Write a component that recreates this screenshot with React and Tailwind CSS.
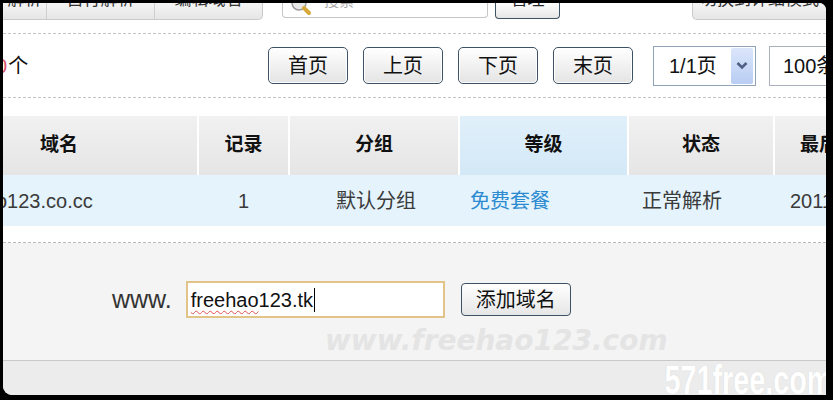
import React from 'react';

const cjk = { fontFamily: '"Liberation Sans", "Noto Sans CJK SC", sans-serif' };

const PageButton = ({ label }) => (
  <div className="flex h-[37px] w-[80px] items-center justify-center rounded-[5px] border-[1.5px] border-[#3e5265] bg-linear-to-b from-white to-[#e4e4e4] text-[20px] text-[#111] shadow-[inset_0_0_0_1px_#ffffff]">
    {label}
  </div>
);

const columns = [
  { title: '域名', w: 'w-[194px]', head: 'justify-start pl-[37px]' },
  { title: '记录', w: 'w-[91px]', head: 'justify-center' },
  { title: '分组', w: 'w-[170px]', head: 'justify-center' },
  { title: '等级', w: 'w-[169px]', head: 'justify-center', active: true },
  { title: '状态', w: 'w-[146px]', head: 'justify-center' },
  { title: '最后解析', w: 'flex-1', head: 'justify-start pl-[25px]' },
];

export default function App() {
  return (
    <div className="h-[400px] w-[833px] overflow-hidden bg-black pt-[3px] pl-[3px] pr-[7px] pb-[5px]" style={cjk}>
      <div className="relative flex h-full w-full flex-col overflow-hidden rounded-tr-[7px] rounded-bl-[9px] bg-white">
        {/* top tab strip, cut off by the frame */}
        <div className="flex h-[17px] shrink-0 items-end">
          <div className="flex h-[17px] overflow-hidden rounded-br-[5px] border-b border-r border-[#c9c9c9] bg-linear-to-b from-[#f4f4f4] to-[#e6e6e6]">
            <div className="flex w-[44px] items-end justify-center border-r border-[#cfcfcf] text-[17px] leading-none text-[#333]">
              <span className="translate-y-[-11px]">解析</span>
            </div>
            <div className="flex w-[108px] items-end justify-center border-r border-[#cfcfcf] text-[17px] leading-none text-[#333]">
              <span className="translate-y-[-11px]">自行解析</span>
            </div>
            <div className="flex w-[107px] items-end justify-center text-[17px] leading-none text-[#333]">
              <span className="translate-y-[-11px]">编辑域名</span>
            </div>
          </div>
          <div className="ml-[19px] flex h-[15px] w-[206px] items-end self-start overflow-hidden rounded-b-[4px] border border-t-0 border-[#c6c6c6] bg-white pl-[7px]">
            <svg width="22" height="16" viewBox="0 0 22 16" className="translate-y-[-1px]">
              <circle cx="9" cy="3" r="7" fill="#e9e9e9" stroke="#9a9a9a" strokeWidth="1.5" />
              <path d="M14 8 L19 13" stroke="#d6a93a" strokeWidth="4" strokeLinecap="round" />
            </svg>
            <span className="ml-[12px] translate-y-[-9px] text-[15px] leading-none text-[#aaa]">搜索</span>
          </div>
          <div className="ml-[7px] flex h-[16px] w-[65px] items-end justify-center self-start overflow-hidden rounded-b-[4px] border-[1.5px] border-t-0 border-[#3e5265] bg-linear-to-b from-white to-[#e6e6e6]">
            <span className="translate-y-[-10px] text-[17px] leading-none text-[#222]">管理</span>
          </div>
          <div className="ml-auto flex h-[17px] w-[134px] items-end justify-center overflow-hidden rounded-bl-[5px] border-b border-l border-[#c9c9c9] bg-linear-to-b from-[#f4f4f4] to-[#e6e6e6]">
            <span className="translate-y-[-11px] whitespace-nowrap text-[17px] leading-none text-[#333]">切换到详细模式</span>
          </div>
        </div>

        <div className="h-[14px] shrink-0 border-b border-dashed border-[#c4c4c4]" />

        {/* pager */}
        <div className="flex h-[64px] shrink-0 items-center border-b border-dashed border-[#c4c4c4]">
          <div className="flex w-[265px] items-center text-[20px] text-[#111]">
            <span className="-ml-[7px] text-[#d9536f]">0</span>
            <span className="ml-[1px]">个</span>
          </div>
          <div className="flex items-center gap-[15px]">
            <PageButton label="首页" />
            <PageButton label="上页" />
            <PageButton label="下页" />
            <PageButton label="末页" />
          </div>
          <div className="ml-[20px] flex h-[40px] w-[103px] items-center border border-[#8fa3b6] bg-white pl-[15px] pr-[2px]">
            <span className="flex-1 text-[20px] text-[#111]">1/1页</span>
            <div className="flex h-[36px] w-[22px] items-center justify-center rounded-[2px] bg-linear-to-b from-[#dbe6fb] to-[#b9cdf3]">
              <svg width="12" height="9" viewBox="0 0 12 9">
                <path d="M1.5 2 L6 6.5 L10.5 2" fill="none" stroke="#4d6185" strokeWidth="2.6" />
              </svg>
            </div>
          </div>
          <div className="ml-[13px] flex h-[40px] flex-1 items-center overflow-hidden border border-r-0 border-[#a9b2bc] bg-white pl-[13px] text-[20px] text-[#111] whitespace-nowrap">
            100条/页
          </div>
        </div>

        <div className="h-[18px] shrink-0" />

        {/* table head */}
        <div className="flex h-[59px] shrink-0 bg-linear-to-b from-[#f1f1f1] to-[#e5e5e5]">
          {columns.map((c, i) => (
            <div
              key={c.title}
              className={`${c.w} flex items-center overflow-hidden whitespace-nowrap text-[19px] font-bold text-[#111] ${c.head} ${i > 0 ? 'border-l-2 border-white' : ''} ${c.active ? 'bg-linear-to-b from-[#e0f0fb] to-[#d3e8f6]' : ''}`}
            >
              {c.title}
            </div>
          ))}
        </div>

        {/* table row */}
        <div className="flex h-[51px] shrink-0 items-center bg-[#e4f3fc] text-[20px] text-[#3a3a3a]">
          <div className="w-[194px] overflow-hidden whitespace-nowrap">
            <span className="-ml-[7px] inline-block">o123.co.cc</span>
          </div>
          <div className="w-[93px] text-center">1</div>
          <div className="w-[172px] text-center">默认分组</div>
          <div className="w-[171px] pl-[8px] text-[#2b8ad0]">免费套餐</div>
          <div className="w-[148px] pl-[9px]">正常解析</div>
          <div className="flex-1 overflow-hidden whitespace-nowrap pl-[9px]">2011-05-02</div>
        </div>

        <div className="h-[17px] shrink-0 border-b border-dashed border-[#b9b9b9]" />

        {/* add domain */}
        <div className="flex h-[118px] shrink-0 flex-col border-b border-[#c9c9c9] bg-[#f4f4f4] pt-[38px]">
          <div className="flex items-center pl-[109px]">
            <span className="text-[25px] leading-none text-[#333]">www.</span>
            <div className="ml-[14px] flex h-[37px] w-[259px] items-center border-2 border-[#e2c388] bg-white pl-[3px] text-[20px] text-[#111]">
              <span className="underline decoration-wavy decoration-[#e05050] decoration-1 underline-offset-[3px]">freehao</span>
              <span>123.tk</span>
              <span className="ml-[1px] h-[24px] w-[1px] bg-black" />
            </div>
            <div className="ml-[16px] flex h-[33px] w-[110px] items-center justify-center rounded-[4px] border-[1.5px] border-[#3e5265] bg-linear-to-b from-white to-[#e6e6e6] text-[20px] text-[#111]">
              添加域名
            </div>
          </div>
        </div>

        <div className="flex-1 bg-[#ececec]" />

        {/* video watermarks */}
        <div
          className="pointer-events-none absolute left-[322px] top-[324px] whitespace-nowrap text-[28px] font-bold italic leading-none text-[#e4e4e4]"
          style={{ fontFamily: '"DejaVu Sans", sans-serif' }}
        >
          www.freehao123.com
        </div>
        <div
          className="pointer-events-none absolute bottom-[-5px] right-[-6px] origin-right scale-x-[0.72] whitespace-nowrap text-[40px] font-bold leading-none text-white [text-shadow:0_0_1px_#cfcfcf]"
          style={{ fontFamily: '"Liberation Sans", sans-serif' }}
        >
          571free.com
        </div>
      </div>
    </div>
  );
}
